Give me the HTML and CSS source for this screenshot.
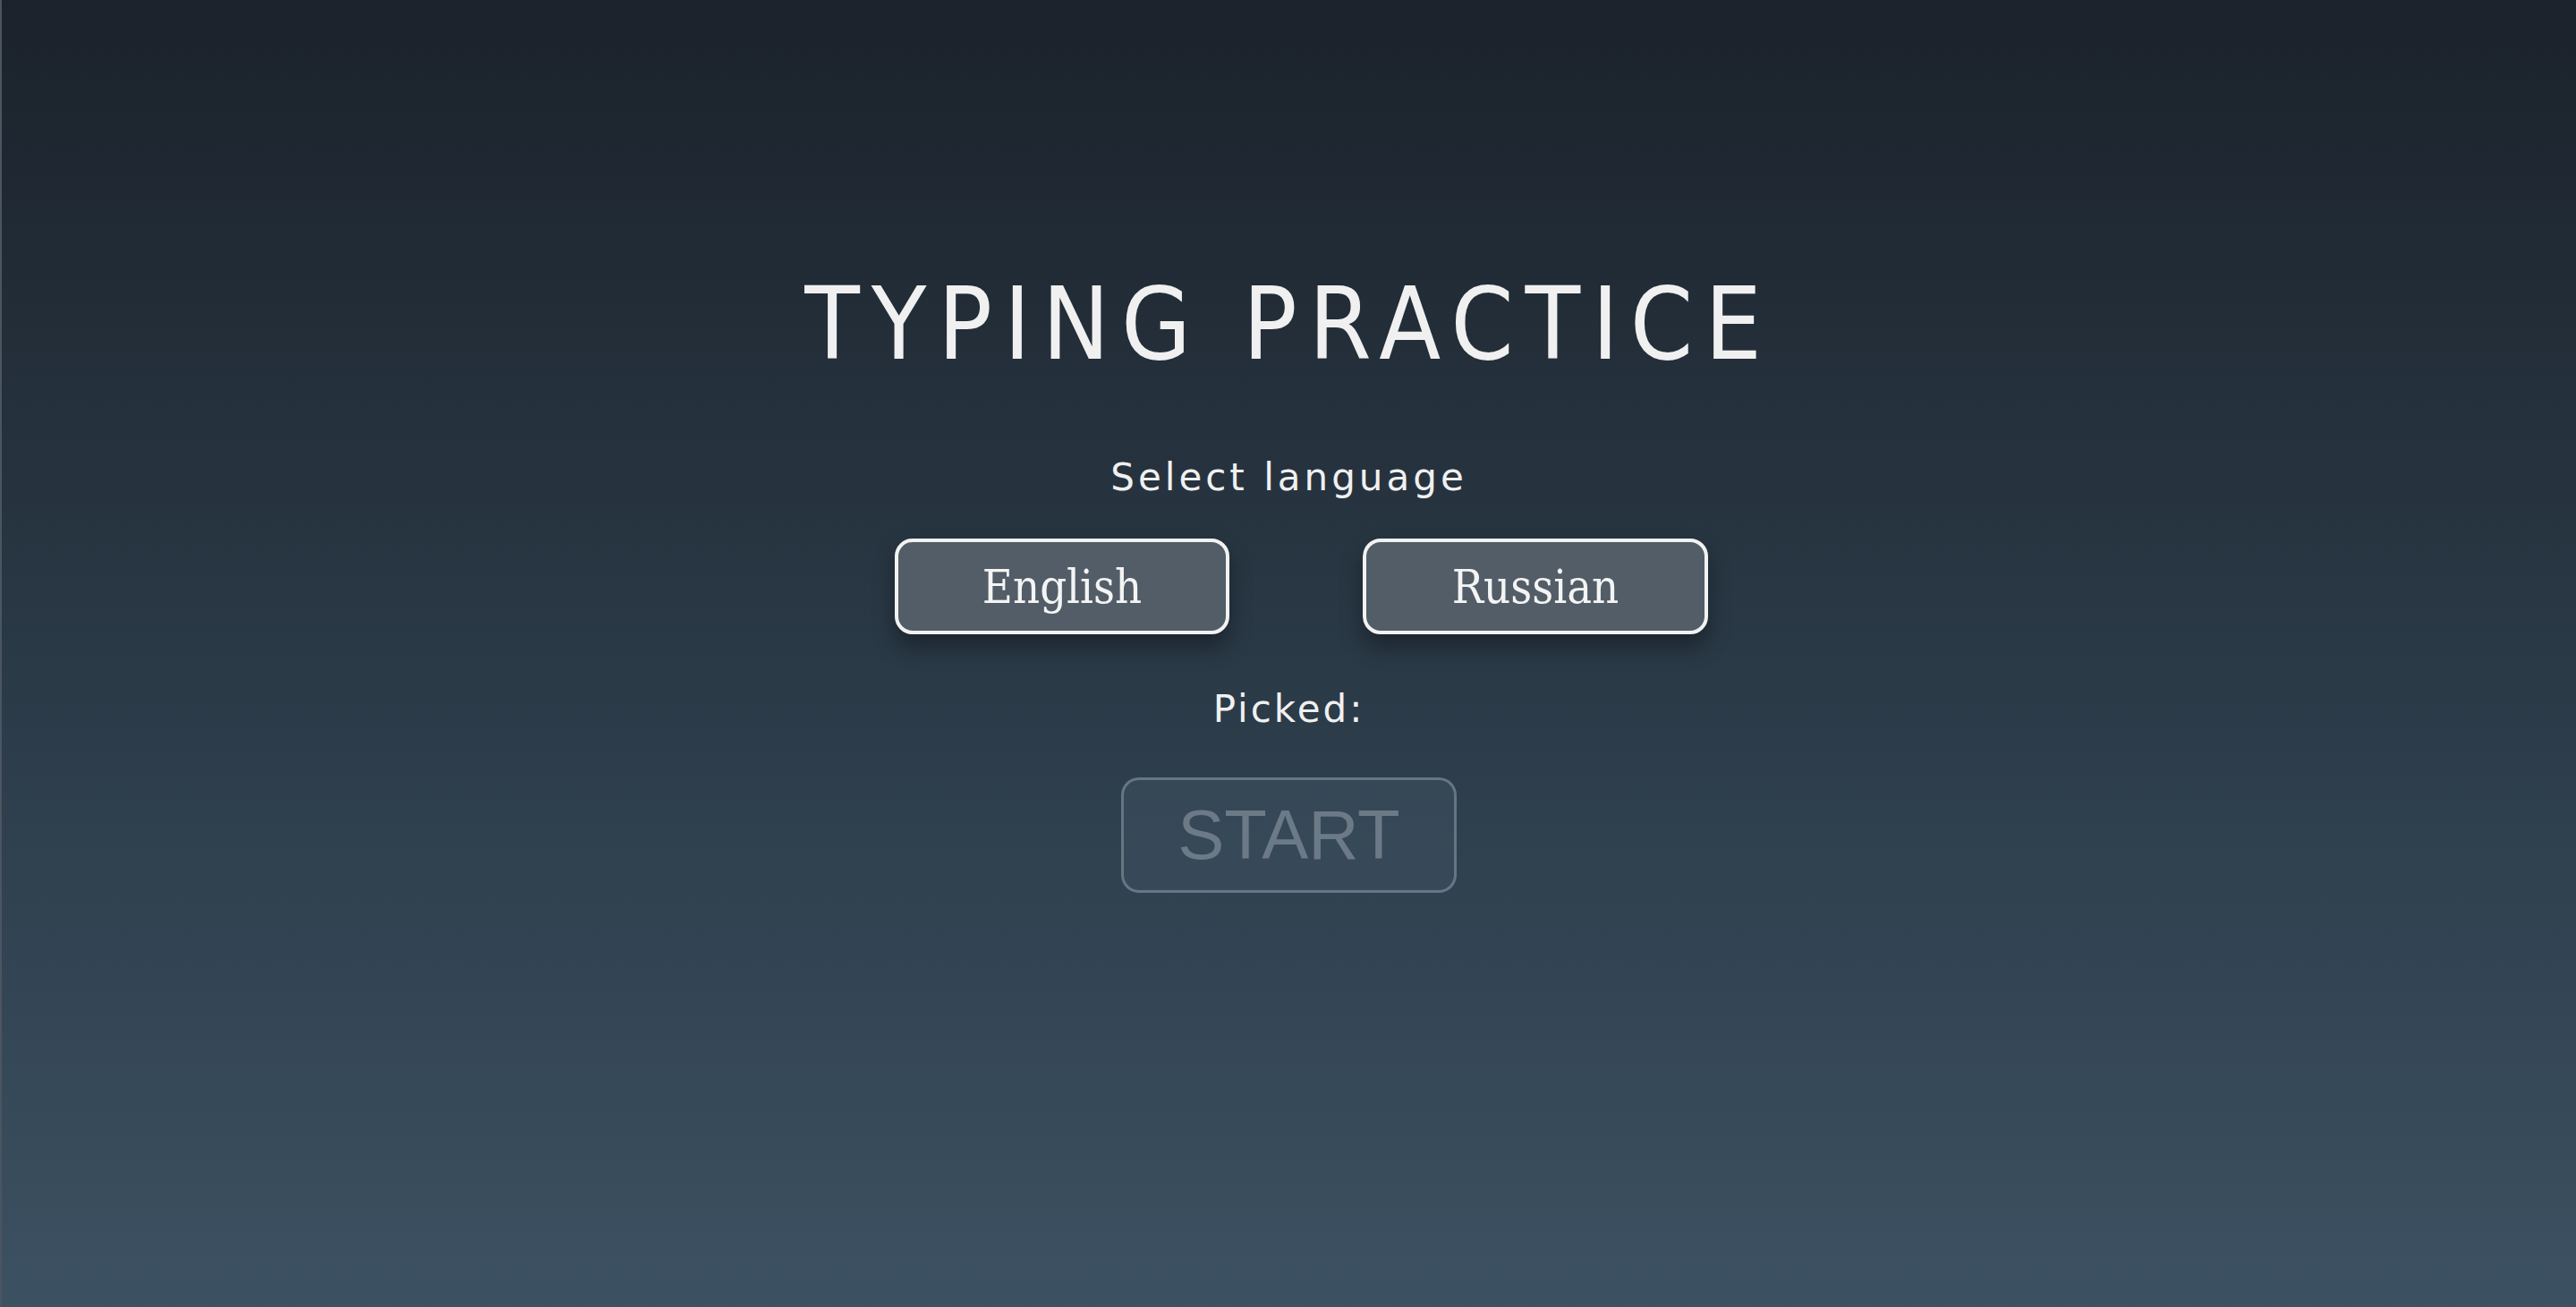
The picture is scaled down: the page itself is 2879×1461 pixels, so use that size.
FILE: index.html
```html
<!DOCTYPE html>
<html lang="en">
<head>
<meta charset="utf-8">
<title>Typing Practice</title>
<link rel="stylesheet" href="styles.css">
</head>
<body>
<main class="screen">
  <h1 class="title">TYPING PRACTICE</h1>
  <p class="label">Select language</p>
  <div class="langs">
    <button class="lang">English</button>
    <button class="lang lang-ru">Russian</button>
  </div>
  <p class="picked">Picked:</p>
  <button class="start" disabled>START</button>
</main>
</body>
</html>
```
FILE: styles.css
```css
html, body {
  margin: 0;
  padding: 0;
  height: 100%;
}
body {
  background: linear-gradient(to bottom, #1b222b 0%, #2a3946 50%, #3c5162 100%);
  color: #f0f0f0;
  font-family: "DejaVu Sans", sans-serif;
  overflow: hidden;
}
.screen {
  height: 100%;
  box-sizing: border-box;
  border-left: 2px solid #4b5561;
  display: flex;
  flex-direction: column;
  align-items: center;
  padding-top: 292px;
}
.title {
  margin: 0;
  font-family: "DejaVu Sans Condensed", "DejaVu Sans", sans-serif;
  font-weight: normal;
  font-size: 112px;
  line-height: 140px;
  letter-spacing: 13px;
  color: #f0f0f0;
}
.label {
  margin: 74px 0 0;
  font-size: 42px;
  line-height: 56px;
  letter-spacing: 4px;
}
.langs {
  display: flex;
  gap: 149px;
  margin-top: 40px;
  padding-left: 28px;
}
.lang {
  width: 374px;
  height: 107px;
  box-sizing: border-box;
  background: #525d67;
  border: 4px solid #f2f2f2;
  border-radius: 20px;
  color: #f4f4f4;
  font-family: "DejaVu Serif Condensed", "DejaVu Serif", serif;
  font-size: 52px;
  box-shadow: 0 14px 24px rgba(0, 0, 0, 0.35);
  cursor: pointer;
}
.lang-ru {
  width: 386px;
}
.picked {
  margin: 56px 0 0;
  font-size: 42px;
  line-height: 56px;
  letter-spacing: 3px;
}
.start {
  margin-top: 48px;
  width: 375px;
  height: 129px;
  box-sizing: border-box;
  background: rgba(64, 84, 100, 0.45);
  border: 3px solid rgba(140, 155, 168, 0.55);
  border-radius: 20px;
  color: #6b7a86;
  font-family: "Liberation Sans", Arial, sans-serif;
  font-size: 78px;
  padding: 0;
}
```
